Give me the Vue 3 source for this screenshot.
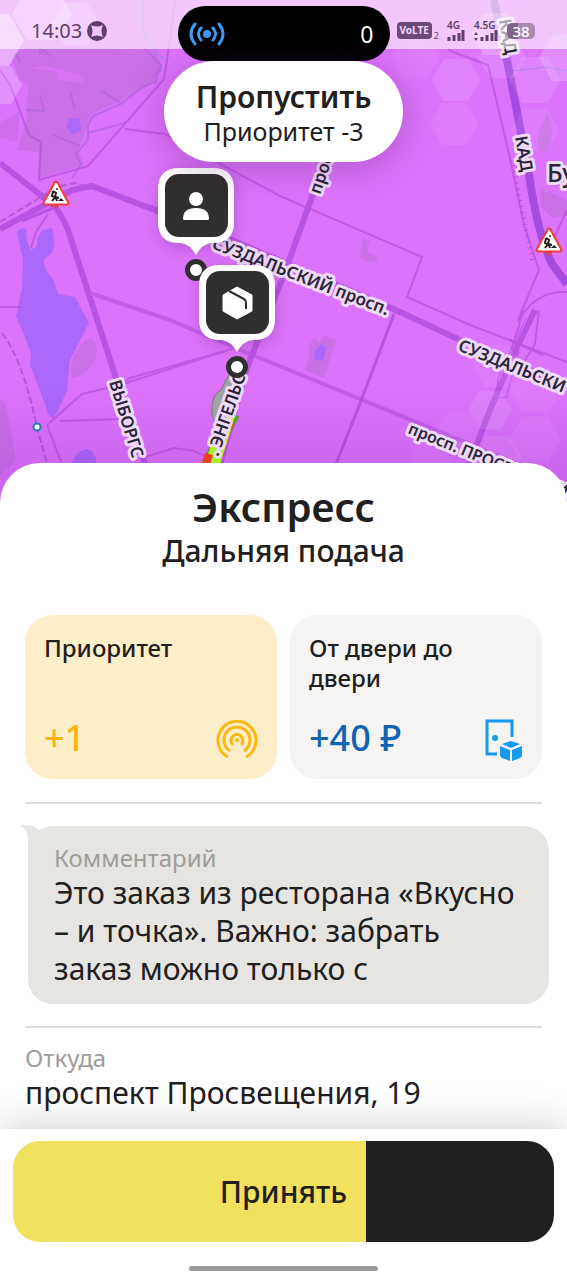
<script setup>
import { ref, computed } from 'vue'

const secondsTotal = 20
const secondsLeft = ref(13.05)
const timerFill = computed(() => {
  const edge = `${(secondsLeft.value / secondsTotal) * 100}%`
  return `linear-gradient(90deg, #f1e15d ${edge}, #21201f ${edge})`
})

const hexes = [
  { x: -6, y: 40, r: 30, o: 0.4 },
  { x: 42, y: 14, r: 30, o: 0.25 },
  { x: 0, y: 85, r: 22, o: 0.22 },
  { x: 76, y: 24, r: 24, o: 0.16 },
  { x: 456, y: 80, r: 24, o: 0.1 },
  { x: 454, y: 124, r: 24, o: 0.06 },
  { x: 495, y: 34, r: 24, o: 0.2 },
  { x: 535, y: 80, r: 26, o: 0.1 },
  { x: 502, y: 57, r: 24, o: 0.1 },
  { x: 535, y: 130, r: 24, o: 0.07 },
  { x: 565, y: 58, r: 26, o: 0.18 },
  { x: 415, y: 58, r: 24, o: 0.05 },
  { x: 497, y: 366, r: 24, o: 0.05 },
  { x: 490, y: 410, r: 22, o: 0.1 },
  { x: 535, y: 390, r: 26, o: 0.06 },
  { x: 458, y: 434, r: 24, o: 0.05 },
  { x: 535, y: 440, r: 26, o: 0.06 },
  { x: 430, y: 466, r: 24, o: 0.04 },
  { x: 498, y: 457, r: 24, o: 0.08 }
]

function hexPoints({ x, y, r }) {
  const h = Math.round(r * 0.87)
  return [
    [x - r, y], [x - r / 2, y - h], [x + r / 2, y - h],
    [x + r, y], [x + r / 2, y + h], [x - r / 2, y + h]
  ].map((p) => p.join(',')).join(' ')
}
</script>

<template>
  <main class="screen">
    <section class="hero">
      <svg class="map" viewBox="0 0 567 504" aria-label="Карта заказа">
        <defs>
          <linearGradient id="shade" x1="0" y1="0" x2="0" y2="1">
            <stop offset="0" stop-color="#7d1fb0" stop-opacity="0" />
            <stop offset="0.76" stop-color="#7d1fb0" stop-opacity="0" />
            <stop offset="0.95" stop-color="#7d1fb0" stop-opacity="0.18" />
          </linearGradient>
          <filter id="soft" x="-50%" y="-50%" width="200%" height="200%">
            <feGaussianBlur stdDeviation="8" />
          </filter>
          <g id="works">
            <path d="M0 -11 L11 9 H-11 Z" fill="#fff" stroke="#ee4036" stroke-width="5" stroke-linejoin="round" />
            <path d="M-3 11 h6 l-3 4 z" fill="#ee4036" />
            <path d="M0 -11 L11 9 H-11 Z" fill="#fff" stroke="#fff" stroke-width="1" stroke-linejoin="round" />
            <circle cx="1" cy="-5" r="1" fill="#222" />
            <path d="M-3 -3 L0 -1 L-1 3 L-4 7 M-1 2 L1 7 M-3 -3 L-4 2 L3 4" stroke="#222" stroke-width="2" fill="none" />
            <path d="M2 7 L5 4 L8 7 Z" fill="#222" />
          </g>
          <g id="pin">
            <rect x="-36" y="-99" width="74" height="76" rx="20" fill="#4b1b66" opacity="0.3" filter="url(#soft)" />
            <path d="M-17 -102 H17 Q38 -102 38 -81 V-48 Q38 -27 17 -27 H15 Q6 -26 0 -15 Q-6 -26 -15 -27 H-17 Q-38 -27 -38 -48 V-81 Q-38 -102 -17 -102 Z" fill="#fff" />
            <rect x="-31" y="-96" width="63" height="63" rx="14" fill="#302f2d" />
            <circle r="8.500" fill="#fff" stroke="#302f2d" stroke-width="5" />
          </g>
        </defs>

        <rect width="567" height="504" fill="#dc74fb" />

        <!-- parks -->
        <g fill="#cb70e6">
          <path d="M10 55 L28 48 H100 L156 50 L162 70 L150 85 L125 98 L90 115 L86 130 L78 150 L84 165 L38 178 L40 152 L17 150 L27 120 L28 82 L20 80 Z" />
          <path d="M30 68 L45 65 L84 76 L82 83 L58 80 L56 72 Z" fill="#d873f5" />
          <path d="M83 342 Q92 335 96 345 Q99 357 90 368 Q80 378 72 378 Q69 369 73 357 Z" />
          <path d="M0 398 L6 405 L16 460 L0 475 Z" />
          <path d="M363 238 L370 240 L367 251 L378 258 L375 263 L360 258 Z" />
          <path d="M540 188 L567 200 V215 L553 218 L541 207 Z" />
          <path d="M308 346 L314 338 L320 342 L325 335 L336 340 L324 378 L305 370 L310 355 Z" />
          <path d="M547 114 Q554 125 551 143 Q544 158 538 150 Q535 135 547 114 Z" />
        </g>
        <path d="M0 123 L20 110 L17 142 L0 138 Z" fill="#d06eed" />

        <!-- water -->
        <g fill="#ac68fb">
          <path d="M17 232 Q20 227 26 229 Q26 242 31 250 Q34 248 37 246 Q36 236 43 230 L52 228 Q56 244 52 253 L44 259 Q43 268 53 279 L58 294 L75 297 L85 316 L89 323 L70 360 L67 391 L54 418 Q48 418 46 407 L30 365 L31 352 L16 316 L22 288 L23 260 Z" />
          <path d="M70 118 L80 119 L81 130 L72 135 L66 126 Z" />
          <path d="M321 344 L327 347 L323 361 L314 359 L315 351 Z" />
          <path d="M73 460 Q78 450 87 449 Q97 451 96 465 L96 480 H66 Z" />
        </g>
        <path d="M40 54 V48 L51 56 M16 54 L20 62 M70 91 L75 110 M26 110 L44 111 L40 96 M100 90 L122 104 M144 48 L161 65 Q160 72 157 73 L156 82 L144 86 L121 104 L93 116 L88 125 L88 140 L76 154 L81 165 L75 174 L72 178 M88 133 L125 123 M53 135 L80 146" fill="none" stroke="#b166e2" stroke-width="2" stroke-opacity="0.75" />
        <path d="M143 0 V30 Q150 45 164 60" fill="none" stroke="#b77cea" stroke-width="2" />

        <!-- minor roads -->
        <g fill="none" stroke="#b64ddc" stroke-width="2" stroke-opacity="0.65">
          <path d="M0 70 L10 85 L29 135 L41 142 L39 180 L88 166 L164 79 L170 40 L175 0" />
          <path d="M125 129 L165 134 L280 196 L422 257 L407 297 L470 325 L567 362" />
          <path d="M0 307 H22 M48 214 L36 232 L31 248" />
          <path d="M235 348 L120 385 L82 394 L47 425 M228 350 L130 378 L118 386 M60 421 L125 419 M47 425 L62 464" />
          <path d="M145 457 L174 448 L194 451 L214 460" />
          <path d="M448 50 L488 65 L510 158 L524 225 L539 270 L518 320" />
          <path d="M567 210 L553 240 M524 310 L511 350 M539 310 L535 344 L522 365 M518 322 Q535 290 567 292 M510 340 L543 355" />
        </g>
        <path d="M0 222 L57 187 L75 183 L158 208 M330 282 L430 326 M2 333 Q22 358 37 427 L47 464" fill="none" stroke="#a84cc8" stroke-width="2" stroke-dasharray="7 3" stroke-opacity="0.7" />
        <path d="M513 165 L533 265" fill="none" stroke="#ac4bd4" stroke-width="4" stroke-dasharray="1 5" stroke-opacity="0.8" />

        <!-- main roads -->
        <g fill="none" stroke="#b854e2" stroke-linejoin="round">
          <path d="M0 163 L52 204 Q62 214 68 230 L116 378 L145 464" stroke-width="6" />
          <path d="M0 229 L52 201 L72 190 L92 186 L220 235 L398 311 L460 340 L567 386" stroke-width="6" />
          <path d="M22 221 L58 206" stroke-width="3" />
          <path d="M90 293 L170 320 L245 352 L365 401 L567 484" stroke-width="4" stroke="#c25fe8" />
          <path d="M318 180 L285 272 L247 368 L220 464" stroke-width="6" />
          <path d="M394 314 L361 401 L336 464" stroke-width="3" />
          <path d="M535 310 L517 347 L492 405 L469 464" stroke-width="6" />
          <path d="M526 318 L498 378 L496 397 L506 398 L519 350" stroke-width="1" />
        </g>
        <path d="M494 0 L510 75 L529 175 Q538 235 552 264 L567 284" fill="none" stroke="#a54bdf" stroke-width="8" />
        <path d="M513 71 L546 67 L567 71 M545 30 L567 42" fill="none" stroke="#a276ef" stroke-width="1" />

        <polygon v-for="(hex, i) in hexes" :key="i" :points="hexPoints(hex)" fill="#fff" :fill-opacity="hex.o" />
        <rect width="567" height="504" fill="url(#shade)" />

        <!-- route -->
        <path d="M231 372 Q224 382 222 389 Q211 395 212 410 Q211 423 221 424 L237 375 Z" fill="#a2a1a5" stroke="#777" stroke-width="1" />
        <path d="M234 414 L207 464" stroke="#5f9b25" stroke-width="12" fill="none" />
        <path d="M224 417 L209 464 M231 416 L216 464" stroke="#a6ef22" stroke-width="8" fill="none" />
        <path d="M222 422 L233 426 M209 454 L206 464" stroke="#ee3d22" stroke-width="8" fill="none" />

        <!-- street names -->
        <g class="street">
          <text transform="translate(211 248) rotate(21)">СУЗДАЛЬСКИЙ просп.</text>
          <text transform="translate(457 350) rotate(22)">СУЗДАЛЬСКИ</text>
          <text transform="translate(407 433) rotate(22)" class="narrow">просп. ПРОСВЕЩЕНИ</text>
          <text transform="translate(109 382) rotate(73)">ВЫБОРГС</text>
          <text transform="translate(218 457) rotate(-71)">. ЭНГЕЛЬС</text>
          <text transform="translate(320 195) rotate(-71)">просп</text>
          <text transform="translate(499 20) rotate(80)">КАД</text>
          <text transform="translate(515 137) rotate(80)">КАД</text>
          <text x="547" y="182" class="town">Бу</text>
        </g>

        <use href="#works" x="56" y="194" />
        <use href="#works" x="549" y="241" />
        <circle cx="37" cy="427" r="3.500" fill="#fff" stroke="#2478c4" stroke-width="2" />

        <use href="#pin" x="196" y="270" />
        <g fill="#fff">
          <circle cx="196" cy="199" r="7" />
          <path d="M183 219 Q183 208 196 208 Q209 208 209 219 Q209 220 207 220 H185 Q183 220 183 219 Z" />
        </g>
        <use href="#pin" x="237" y="367" />
        <path d="M237 287 L252 295 V311 L237 319 L223 311 V295 Z" fill="#fff" stroke="#fff" stroke-width="1" stroke-linejoin="round" />
        <path d="M229 291 L244 299 Q246 300 246 303 V309" fill="none" stroke="#302f2d" stroke-width="2" />
      </svg>

      <header class="status">
        <div class="clock">
          <span>14:03</span>
          <svg width="20" height="20" viewBox="0 0 20 20" aria-hidden="true">
            <circle cx="10" cy="10" r="10" />
            <path class="cut" d="M4 4 Q10 7 16 4 Q13 10 16 16 Q10 13 4 16 Q7 10 4 4 Z" />
          </svg>
        </div>
        <div class="island">
          <svg width="36" height="28" viewBox="0 0 36 28" aria-hidden="true">
            <circle cx="18" cy="14" r="4" fill="#3f9bf5" />
            <path d="M12 8 Q7 14 12 20 M24 8 Q29 14 24 20 M6 4 Q-2 14 6 24 M30 4 Q38 14 30 24" fill="none" stroke="#3f9bf5" stroke-width="3" stroke-linecap="round" />
          </svg>
          <span>0</span>
        </div>
        <div class="signals">
          <span class="volte">VoLTE</span>
          <span class="sim">2</span>
          <span class="net">4G
            <svg width="18" height="11" viewBox="0 0 18 11" aria-hidden="true">
              <path d="M2 7 V11 M7 5 V11 M12 3 V11 M16 0 V11" />
            </svg>
          </span>
          <span class="net">4.5G
            <svg width="24" height="11" viewBox="0 0 24 11" aria-hidden="true">
              <path d="M8 7 V11 M13 5 V11 M18 3 V11 M22 0 V11" />
              <path class="solid" d="M0 5 L2 2 L4 5 Z M0 8 L2 11 L4 8 Z" />
            </svg>
          </span>
          <span class="battery">38</span>
        </div>
      </header>

      <button type="button" class="skip">
        <strong>Пропустить</strong>
        <span>Приоритет -3</span>
      </button>
    </section>

    <section class="sheet">
      <h1>Экспресс</h1>
      <h2>Дальняя подача</h2>

      <div class="cards">
        <article class="card priority">
          <h3>Приоритет</h3>
          <div class="card-foot">
            <b>+1</b>
            <svg width="42" height="42" viewBox="0 0 42 42" fill="none" stroke="#f9b912" stroke-width="3" aria-hidden="true">
              <path d="M12 38 A19 19 0 1 1 30 38" />
              <path d="M14 32 A13 13 0 1 1 28 32" />
              <path d="M17 26 A6 6 0 1 1 25 26" />
              <circle cx="21" cy="21" r="2" fill="#f9b912" stroke="none" />
            </svg>
          </div>
        </article>
        <article class="card door">
          <h3>От двери до двери</h3>
          <div class="card-foot">
            <b>+40 ₽</b>
            <svg width="38" height="42" viewBox="0 0 38 42" aria-hidden="true">
              <path d="M12 35 H2 V2 H27 V18" fill="none" stroke="#1599f0" stroke-width="3" />
              <circle cx="10" cy="19" r="3" fill="#1599f0" />
              <path d="M26 22 L35 25 L26 29 L17 25 Z M15 27 L25 31 V42 L17 39 Q15 38 15 36 Z M37 27 L27 31 V42 L35 39 Q37 38 37 36 Z" fill="#1599f0" />
            </svg>
          </div>
        </article>
      </div>

      <hr />

      <article class="comment">
        <svg class="tail" width="24" height="30" viewBox="0 0 24 30" aria-hidden="true">
          <path d="M0 0 Q12 -1 18 5 L24 3 V30 H8 V15 Q8 4 0 0 Z" fill="#e6e5e1" />
        </svg>
        <h4>Комментарий</h4>
        <p>Это заказ из ресторана «Вкусно – и точка». Важно: забрать заказ можно только с</p>
      </article>

      <hr />

      <article class="from">
        <h4>Откуда</h4>
        <p>проспект Просвещения, 19</p>
      </article>
    </section>

    <footer class="actions">
      <button type="button" class="accept" :style="{ background: timerFill }">Принять</button>
      <div class="home"></div>
    </footer>
  </main>
</template>

<style>
body {
  margin: 0;
  background: #fff;
}
</style>

<style scoped>
.screen {
  display: flex;
  flex-direction: column;
  min-height: 100vh;
  overflow: hidden;
  color: #21201f;
  font-family: "Noto Sans", "Open Sans", sans-serif;
}
h1, h2, h3, h4, p {
  margin: 0;
  font-weight: 400;
}
button {
  border: 0;
  padding: 0;
  color: inherit;
  font-family: inherit;
  cursor: pointer;
}

.hero {
  display: grid;
  grid-template-rows: auto 1fr;
  justify-items: center;
}
.map {
  grid-area: 1 / 1 / 3 / 2;
  display: block;
  width: 100%;
  height: auto;
}
.street {
  font-size: 17px;
  font-weight: 600;
  fill: #2b2438;
  stroke: #eed9f7;
  stroke-width: 6px;
  stroke-linejoin: round;
  paint-order: stroke;
}
.narrow { font-size: 16px; }
.town {
  font-size: 25px;
  font-weight: 500;
}

.status {
  grid-area: 1 / 1;
  z-index: 1;
  width: 100%;
  height: 49px;
  display: grid;
  grid-template-columns: 1fr 212px 1fr;
  background: rgba(255, 255, 255, 0.6);
  color: #5c3f6b;
}
.clock {
  display: flex;
  align-items: center;
  gap: 5px;
  padding: 12px 0 0 31px;
  height: 37px;
  font-size: 20px;
}
.clock svg { fill: #5c3f6b; }
.clock .cut { fill: #edc6f8; }
.island {
  box-sizing: border-box;
  height: 55px;
  margin-top: 6px;
  padding: 0 16px 0 11px;
  border-radius: 28px;
  background: #000;
  color: #fff;
  font-size: 23px;
  display: flex;
  align-items: center;
  justify-content: space-between;
}
.signals {
  display: flex;
  align-items: center;
  padding: 12px 0 0 7px;
  height: 37px;
}
.volte {
  padding: 0 3px;
  border-radius: 4px;
  background: #6c4a78;
  color: #f3d5fb;
  font-size: 10px;
  font-weight: 700;
  line-height: 17px;
}
.sim {
  padding: 10px 8px 0 2px;
  font-size: 9px;
}
.net {
  display: flex;
  flex-direction: column;
  margin-right: 9px;
  font-size: 10px;
  font-weight: 600;
  line-height: 10px;
}
.net svg {
  fill: none;
  stroke: #5c3f6b;
  stroke-width: 3;
}
.net .solid {
  fill: #5c3f6b;
  stroke: none;
}
.battery {
  width: 28px;
  border-radius: 5px;
  background: linear-gradient(90deg, #806488 38%, #a98bb1 38%);
  color: #fff;
  font-size: 15px;
  font-weight: 500;
  line-height: 16px;
  text-align: center;
}

.skip {
  grid-area: 2 / 1;
  z-index: 1;
  align-self: start;
  margin-top: 12px;
  padding: 17px 32px 15px;
  border-radius: 51px;
  background: #fff;
  box-shadow: 0 6px 36px rgba(80, 20, 100, 0.3);
  display: flex;
  flex-direction: column;
  align-items: center;
}
.skip strong {
  font-size: 30px;
  font-weight: 600;
  line-height: 38px;
}
.skip span {
  font-size: 25px;
  line-height: 31px;
}

.sheet {
  position: relative;
  flex: 1;
  margin-top: -41px;
  padding: 19px 25px 16px;
  border-radius: 40px 40px 0 0;
  background: #fff;
}
h1 {
  text-align: center;
  font-size: 40px;
  font-weight: 600;
  line-height: 50px;
}
h2 {
  text-align: center;
  font-size: 30px;
  font-weight: 500;
  line-height: 38px;
}
.cards {
  display: grid;
  grid-template-columns: 1fr 1fr;
  gap: 13px;
  margin: 45px 0 23px;
}
.card {
  box-sizing: border-box;
  min-height: 164px;
  padding: 18px 19px;
  border-radius: 27px;
  display: flex;
  flex-direction: column;
  justify-content: space-between;
}
.priority { background: #fceec8; }
.door { background: #f5f4f2; }
h3 {
  font-size: 24px;
  font-weight: 500;
  line-height: 30px;
}
.card-foot {
  display: flex;
  align-items: flex-start;
  justify-content: space-between;
}
.card-foot b {
  font-size: 36px;
  font-weight: 500;
  line-height: 38px;
}
.priority b { color: #fab60f; }
.door b { color: #0f63b5; }

hr {
  height: 2px;
  margin: 0;
  border: 0;
  background: #dedede;
}
.comment {
  position: relative;
  margin: 22px -7px 22px 3px;
  padding: 16px 24px 16px 26px;
  border-radius: 25px;
  background: #e6e5e1;
}
.tail {
  position: absolute;
  top: -1px;
  left: -8px;
}
h4 {
  color: #9f9c99;
  font-size: 24px;
  line-height: 32px;
}
p {
  font-size: 30px;
  line-height: 38px;
}
.from { padding-top: 14px; }

.actions {
  position: relative;
  padding: 12px 13px 9px;
  background: #fff;
  box-shadow: 0 -4px 36px rgba(0, 0, 0, 0.18);
}
.accept {
  display: block;
  width: 100%;
  height: 101px;
  border-radius: 27px;
  font-size: 30px;
  font-weight: 500;
}
.home {
  width: 35%;
  height: 5px;
  margin: 24px auto 0;
  border-radius: 3px;
  background: #9b9b9b;
}
</style>
